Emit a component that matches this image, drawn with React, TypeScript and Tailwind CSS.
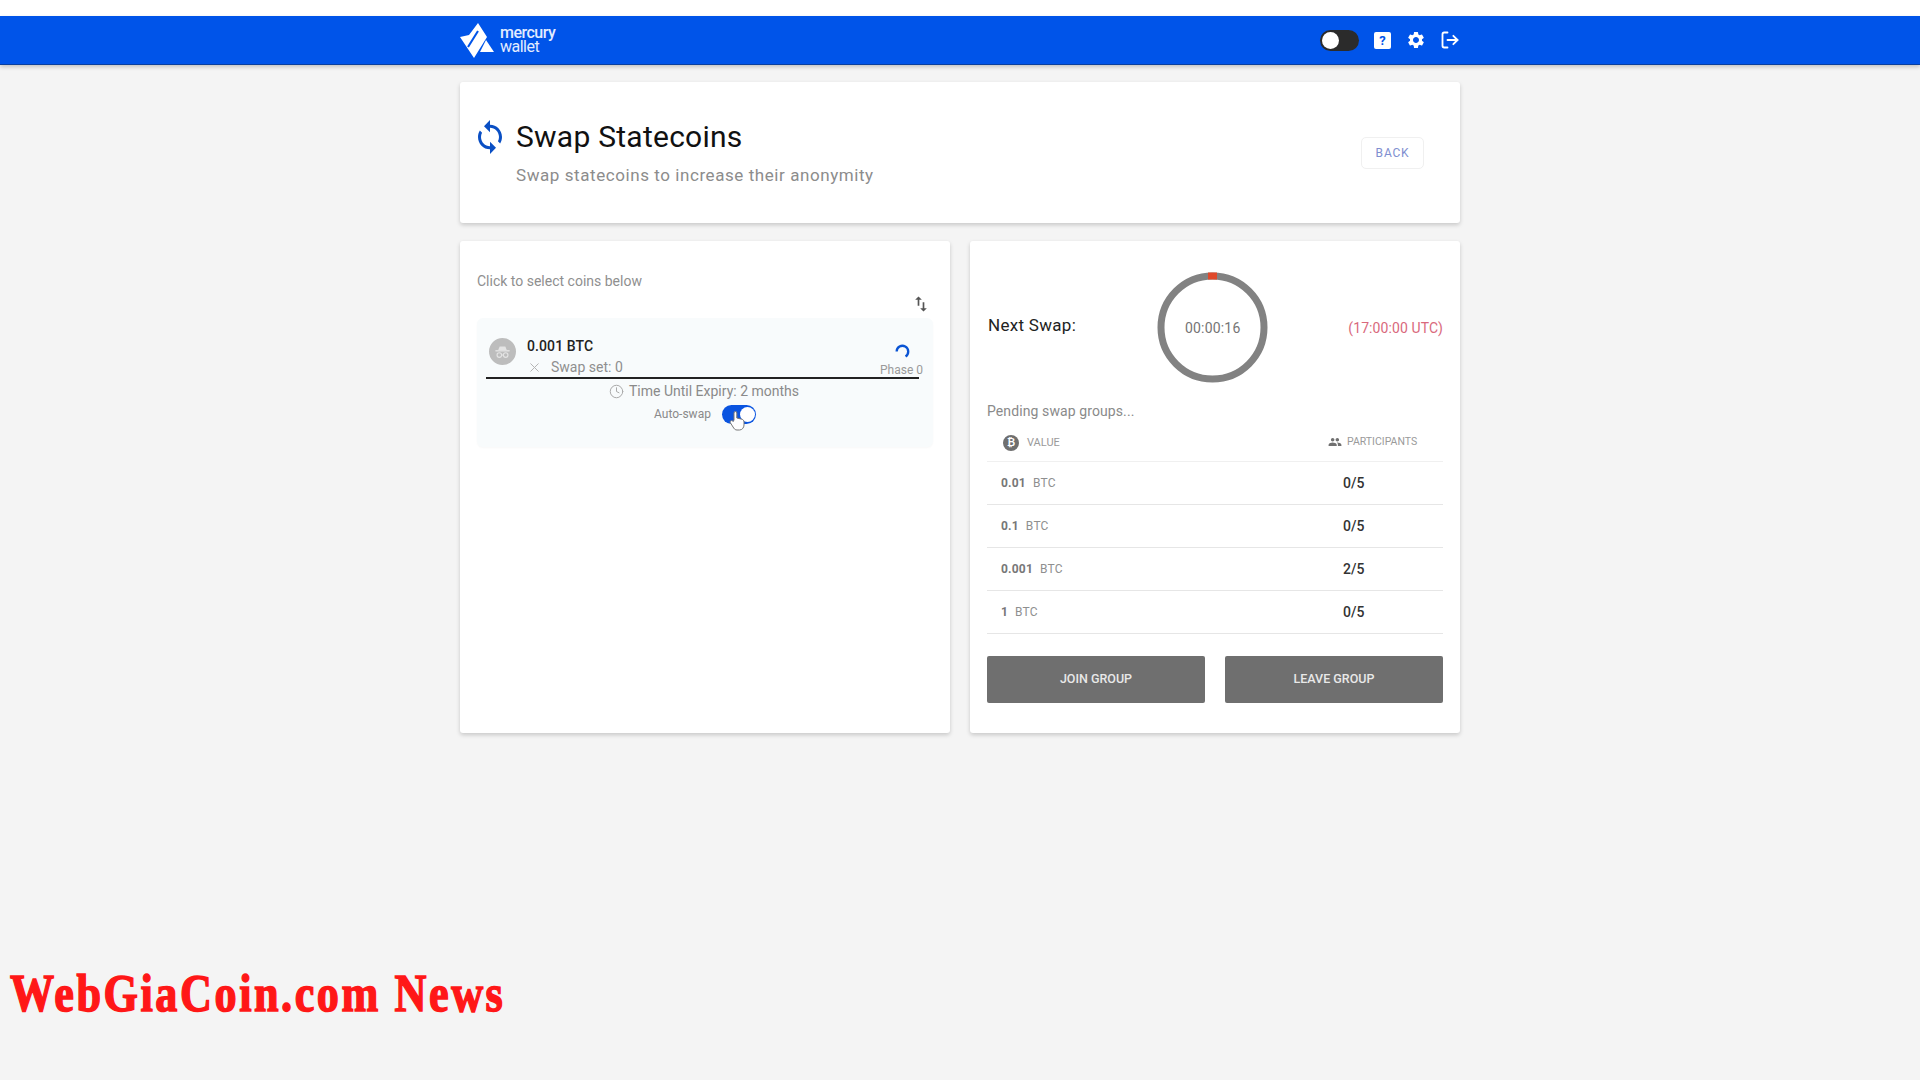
import { Clock, LogOut, X } from "lucide-react";

const groups = [
  { value: "0.01", count: "0/5" },
  { value: "0.1", count: "0/5" },
  { value: "0.001", count: "2/5" },
  { value: "1", count: "0/5" },
];

function MercuryLogo() {
  return (
    <svg width="36" height="36" viewBox="0 0 36 36" aria-hidden="true">
      <path d="M1 15 L10 13 L19 1 L28 15 L15 36 Z" fill="#fff" />
      <path d="M9 25 L19 9" stroke="#0054e9" strokeWidth="2" fill="none" />
      <path d="M27 18 L35 30 L21 30 Z" fill="#fff" />
    </svg>
  );
}

function CoinIcon() {
  return (
    <div className="flex h-[27px] w-[27px] items-center justify-center rounded-full bg-[#bdbdbd]">
      <svg width="17" height="17" viewBox="0 0 24 24" fill="none" aria-hidden="true">
        <path d="M8 5h8l2 5H6z" fill="#e4e4e4" />
        <path d="M2 11h20" stroke="#e4e4e4" strokeWidth="2" />
        <circle cx="7.5" cy="17" r="3.2" stroke="#e4e4e4" strokeWidth="1.6" />
        <circle cx="16.5" cy="17" r="3.2" stroke="#e4e4e4" strokeWidth="1.6" />
        <path d="M10.5 17h3" stroke="#e4e4e4" strokeWidth="1.6" />
      </svg>
    </div>
  );
}

function TimerRing() {
  return (
    <div className="relative flex h-[111px] w-[111px] items-center justify-center">
      <svg className="absolute inset-0" width="111" height="111" viewBox="0 0 111 111" aria-hidden="true">
        <circle cx="55.5" cy="55.5" r="51.5" fill="none" stroke="#828282" strokeWidth="7" />
        <rect x="51" y="0.5" width="9" height="7" fill="#e0492b" />
      </svg>
      <span className="text-sm tracking-[0.2px] text-[#757575]">00:00:16</span>
    </div>
  );
}

export default function App() {
  return (
    <div className="relative min-h-[1080px] bg-[#f4f4f4] font-['Roboto',sans-serif]">
      <div className="h-4 bg-white" />
      <header className="h-[49px] border-b border-[#0a3f9e] bg-[#0054e9] shadow-[0_2px_4px_rgba(0,0,0,0.2)]">
        <div className="mx-auto flex h-full w-[1000px] items-center justify-between">
          <div className="flex items-center gap-[5px]">
            <div className="-ml-px">
              <MercuryLogo />
            </div>
            <div className="text-base leading-[14px] tracking-[-0.5px] text-[#e3ecff]">
              <div className="font-medium">mercury</div>
              <div>wallet</div>
            </div>
          </div>
          <div className="flex items-center text-white">
            <div className="flex h-[21px] w-[39px] items-center rounded-full bg-[#2b2b2b] pl-[2px]">
              <div className="h-[17px] w-[17px] rounded-full bg-white" />
            </div>
            <div className="ml-[15px] flex h-[17px] w-[17px] items-center justify-center rounded-[2px] bg-white text-[13px] leading-none font-bold text-[#0054e9]">
              ?
            </div>
            <svg className="ml-[15px]" width="20" height="20" viewBox="0 0 24 24" fill="#fff" aria-hidden="true">
              <path d="M19.14 12.94c.04-.3.06-.61.06-.94 0-.32-.02-.64-.07-.94l2.03-1.58a.49.49 0 0 0 .12-.61l-1.92-3.32a.488.488 0 0 0-.59-.22l-2.39.96c-.5-.38-1.03-.7-1.62-.94l-.36-2.54a.484.484 0 0 0-.48-.41h-3.84c-.24 0-.43.17-.47.41l-.36 2.54c-.59.24-1.13.57-1.62.94l-2.39-.96c-.22-.08-.47 0-.59.22L2.74 8.87c-.12.21-.08.47.12.61l2.03 1.58c-.05.3-.09.63-.09.94s.02.64.07.94l-2.03 1.58a.49.49 0 0 0-.12.61l1.92 3.32c.12.22.37.29.59.22l2.39-.96c.5.38 1.03.7 1.62.94l.36 2.54c.05.24.24.41.48.41h3.84c.24 0 .44-.17.47-.41l.36-2.54c.59-.24 1.13-.56 1.62-.94l2.39.96c.22.08.47 0 .59-.22l1.92-3.32c.12-.22.07-.47-.12-.61l-2.01-1.58zM12 15.6c-1.98 0-3.6-1.62-3.6-3.6s1.62-3.6 3.6-3.6 3.6 1.62 3.6 3.6-1.62 3.6-3.6 3.6z" />
            </svg>
            <LogOut className="ml-[14px] h-5 w-5" strokeWidth={2.2} />
          </div>
        </div>
      </header>

      <main className="mx-auto flex w-[1000px] flex-col gap-[18px] pt-[17px]">
        <section className="flex h-[141px] items-center justify-between rounded-[3px] bg-white pr-9 pl-[18px] shadow-[0_2px_4px_rgba(0,0,0,0.18)]">
          <div>
            <div className="flex items-center gap-[14px]">
              <svg width="24" height="34" viewBox="4 1 16 22" preserveAspectRatio="none" fill="#0a4fc4" aria-hidden="true">
                <path d="M12 4V1L8 5l4 4V6c3.31 0 6 2.69 6 6 0 1.01-.25 1.97-.7 2.8l1.46 1.46C19.54 15.03 20 13.57 20 12c0-4.42-3.58-8-8-8zm0 14c-3.31 0-6-2.69-6-6 0-1.01.25-1.97.7-2.8L5.24 7.74C4.46 8.97 4 10.43 4 12c0 4.42 3.58 8 8 8v3l4-4-4-4v3z" />
              </svg>
              <h1 className="text-3xl leading-9 tracking-[0.25px] text-[#111]">Swap Statecoins</h1>
            </div>
            <p className="mt-2 ml-[38px] text-[17px] leading-6 tracking-[0.57px] text-[#8c8c8c]">
              Swap statecoins to increase their anonymity
            </p>
          </div>
          <button className="flex h-[32px] w-[63px] items-center justify-center rounded-[5px] border border-[#f0f0f0] text-xs tracking-[0.8px] text-[#7f8fd0]">
            BACK
          </button>
        </section>

        <div className="grid grid-cols-[490px_490px] gap-5">
          <section className="h-[492px] rounded-[3px] bg-white px-[17px] pt-[31px] shadow-[0_2px_4px_rgba(0,0,0,0.18)]">
            <p className="text-sm leading-[18px] text-[#8f8f8f]">Click to select coins below</p>
            <div className="mt-[3px] flex h-[22px] items-center justify-end pr-[2px]">
              <svg width="20" height="22" viewBox="0 0 24 24" fill="#555" aria-hidden="true">
                <path d="M16 17.01V10h-2v7.01h-3L15 21l4-3.99h-3zM9 3 5 6.99h3V14h2V6.99h3L9 3z" />
              </svg>
            </div>
            <div className="mt-[3px] h-[129px] rounded-md bg-[#f8fbfc] pr-[14px] pl-[9px] pt-[19px] shadow-[0_1px_2px_rgba(0,0,0,0.03)]">
              <div className="flex h-[40px] items-start justify-between">
                <div className="flex gap-[11px]">
                  <div className="pl-[3px] pt-[1px]">
                    <CoinIcon />
                  </div>
                  <div>
                    <div className="text-sm leading-[18px] font-medium tracking-[0.1px] text-[#222]">0.001 BTC</div>
                    <div className="mt-[3px] flex items-center gap-[9px] text-sm leading-[18px] text-[#8f8f8f]">
                      <X className="h-[15px] w-[15px] text-[#b5b5b5]" strokeWidth={1.6} />
                      <span>Swap set: 0</span>
                    </div>
                  </div>
                </div>
                <div className="-mr-[4px] flex flex-col items-center pt-[7px]">
                  <svg width="16" height="16" viewBox="0 0 18 18" fill="none" aria-hidden="true">
                    <path d="M3 8.5 A6.5 6.5 0 1 1 13 14" stroke="#0a54d4" strokeWidth="2.6" />
                  </svg>
                  <span className="mt-[3px] text-xs leading-[14px] text-[#9a9a9a]">Phase 0</span>
                </div>
              </div>
              <div className="h-[2px] bg-[#222]" />
              <div className="mt-[2px] flex items-center justify-center gap-[5px] pl-[3px] text-sm leading-[20px] text-[#8a8a8a]">
                <Clock className="h-[15px] w-[15px] text-[#aaa]" strokeWidth={1.6} />
                <span>Time Until Expiry: 2 months</span>
              </div>
              <div className="mt-[3px] flex items-center justify-center gap-[11px] pl-[5px]">
                <span className="text-xs leading-5 text-[#8a8a8a]">Auto-swap</span>
                <div className="relative flex h-[19px] w-[34px] items-center justify-end rounded-full bg-[#0a54e0] pr-[1px]">
                  <div className="h-[15px] w-[15px] rounded-full bg-white" />
                  <svg className="absolute top-[5px] left-[7px]" width="17" height="21" viewBox="0 0 17 21" aria-hidden="true">
                    <path
                      d="M5 10V3a1.4 1.4 0 0 1 2.8 0v5l5 1.2c1.4.4 2.2 1.3 2.2 2.8v3c0 2.5-1.8 5-4.5 5H8c-1.5 0-2.4-.7-3.2-1.8L1.5 13c-.7-1-.3-2 .5-2.3.8-.3 1.6 0 2.2.8z"
                      fill="#fff"
                      stroke="#777"
                      strokeWidth="1"
                    />
                  </svg>
                </div>
              </div>
            </div>
          </section>

          <section className="flex h-[492px] flex-col rounded-[3px] bg-white px-[17px] pt-[31px] shadow-[0_2px_4px_rgba(0,0,0,0.18)]">
            <div className="flex items-center justify-between">
              <span className="mb-[5px] ml-px text-[17px] leading-6 tracking-[0.3px] text-[#222]">Next Swap:</span>
              <div className="ml-[1px]">
                <TimerRing />
              </div>
              <span className="text-sm tracking-[0.1px] text-[#d9697c]">(17:00:00 UTC)</span>
            </div>
            <p className="mt-[18px] text-sm leading-[20px] tracking-[0.1px] text-[#8a8a8a]">Pending swap groups...</p>

            <div className="flex h-[41px] items-center border-b border-[#f0f0f0] pt-1 text-[11px] text-[#9a9a9a]">
              <div className="flex flex-1 items-center gap-2 pl-4">
                <div className="flex h-4 w-4 items-center justify-center rounded-full bg-[#6f6f6f] text-[10px] leading-none font-bold text-white">
                  ₿
                </div>
                <span>VALUE</span>
              </div>
              <div className="flex w-[115px] items-center gap-[5px] pb-[2px] text-[10.5px]">
                <svg width="14" height="14" viewBox="0 0 24 24" fill="#707070" aria-hidden="true">
                  <path d="M16 11c1.66 0 2.99-1.34 2.99-3S17.66 5 16 5c-1.66 0-3 1.34-3 3s1.34 3 3 3zm-8 0c1.66 0 2.99-1.34 2.99-3S9.66 5 8 5C6.34 5 5 6.34 5 8s1.34 3 3 3zm0 2c-2.33 0-7 1.17-7 3.5V19h14v-2.5c0-2.33-4.67-3.5-7-3.5zm8 0c-.29 0-.62.02-.97.05 1.16.84 1.97 1.97 1.97 3.45V19h6v-2.5c0-2.33-4.67-3.5-7-3.5z" />
                </svg>
                <span>PARTICIPANTS</span>
              </div>
            </div>

            {groups.map((group) => (
              <div key={group.value} className="flex h-[43px] items-center border-b border-[#e6e6e6]">
                <div className="flex flex-1 items-center gap-[7px] pl-[14px] text-xs tracking-[0.2px]">
                  <span className="font-bold text-[#777]">{group.value}</span>
                  <span className="text-[#8f8f8f]">BTC</span>
                </div>
                <span className="w-[100px] text-sm font-medium text-[#333]">{group.count}</span>
              </div>
            ))}

            <div className="mt-[22px] grid grid-cols-2 gap-[20px]">
              <button className="h-[47px] rounded-[2px] bg-[#6f6f6f] text-[12.5px] font-medium text-[#e8e8e8]">JOIN GROUP</button>
              <button className="h-[47px] rounded-[2px] bg-[#6f6f6f] text-[12.5px] font-medium text-[#e8e8e8]">LEAVE GROUP</button>
            </div>
          </section>
        </div>
      </main>

      <div className="absolute top-[964px] left-[10px] origin-left scale-x-[0.85] font-['Liberation_Serif',serif] text-[52px] leading-[60px] font-bold tracking-[3px] whitespace-nowrap text-[#ff1717] [-webkit-text-stroke:1.5px_#ff1717]">
        WebGiaCoin.com News
      </div>
    </div>
  );
}
